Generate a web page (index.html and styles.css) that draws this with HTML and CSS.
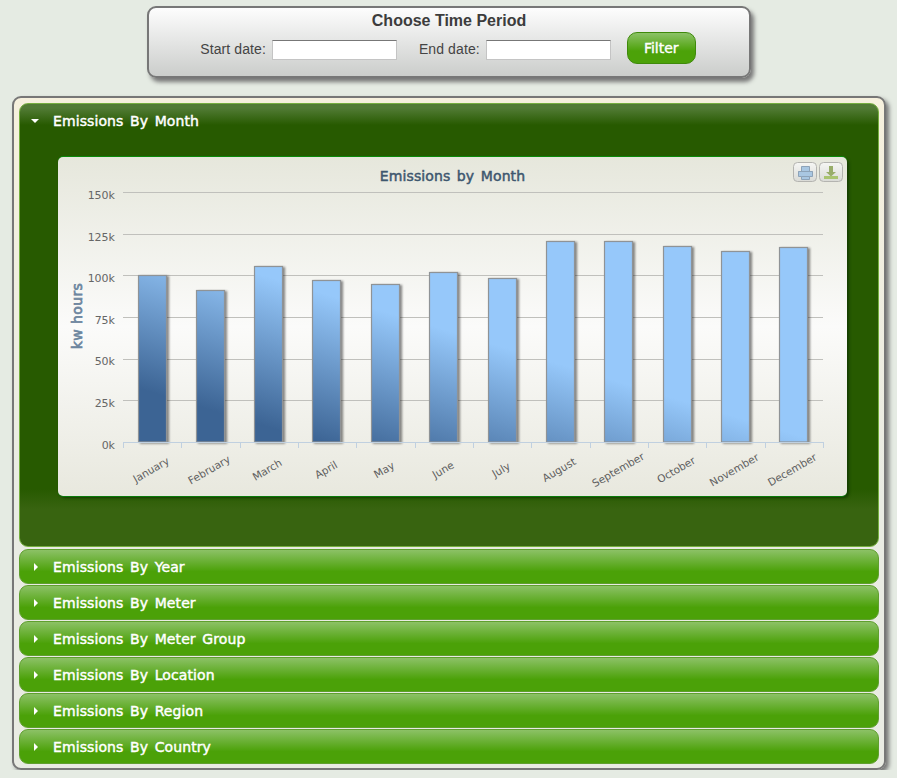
FILE: index.html
```html
<!DOCTYPE html>
<html lang="en">
<head>
    <meta charset="UTF-8">
    <meta name="viewport" content="width=device-width, initial-scale=1.0">
    <title>Emissions</title>
    <link rel="stylesheet" href="styles.css">
</head>
<body>

<form class="period-form">
    <h3>Choose Time Period</h3>
    <div class="period-row">
        <label for="start-date">Start date:</label>
        <input type="text" id="start-date">
        <label for="end-date" class="end-label">End date:</label>
        <input type="text" id="end-date">
        <button type="button" class="filter-button">Filter</button>
    </div>
</form>

<div class="accordion">
    <div class="section active">
        <h3 class="section-header"><span class="arrow-down"></span>Emissions By Month</h3>
        <div class="chart-card">
            <svg class="chart" width="789" height="339" viewBox="0 0 789 339">
                <defs>
                    <linearGradient id="bar-fill" gradientUnits="userSpaceOnUse" x1="94" y1="85" x2="52.7" y2="223">
                        <stop offset="0" stop-color="#96c8fa"/>
                        <stop offset="1" stop-color="#3c6494"/>
                    </linearGradient>
                    <linearGradient id="button-fill" x1="0" y1="0" x2="0" y2="1">
                        <stop offset="0" stop-color="#f6f6f4"/>
                        <stop offset="1" stop-color="#d9dad6"/>
                    </linearGradient>
                </defs>

                <text class="chart-title" x="394.5" y="24" text-anchor="middle">Emissions by Month</text>

                <!-- grid -->
                <g class="grid">
                    <path d="M65 35.5H765"/>
                    <path d="M65 77.5H765"/>
                    <path d="M65 118.5H765"/>
                    <path d="M65 160.5H765"/>
                    <path d="M65 202.5H765"/>
                    <path d="M65 243.5H765"/>
                </g>

                <!-- y axis -->
                <g class="y-labels" text-anchor="end">
                    <text x="57" y="42">150k</text>
                    <text x="57" y="84">125k</text>
                    <text x="57" y="125">100k</text>
                    <text x="57" y="167">75k</text>
                    <text x="57" y="208">50k</text>
                    <text x="57" y="250">25k</text>
                    <text x="57" y="292">0k</text>
                </g>
                <text class="y-title" transform="translate(24 159) rotate(-90)" text-anchor="middle">kw hours</text>

                <!-- bars -->
                <g class="bars">
                    <rect x="80.5" y="118.5" width="28" height="166.5"/>
                    <rect x="138.5" y="133.5" width="28" height="151.5"/>
                    <rect x="196.5" y="109.5" width="28" height="175.5"/>
                    <rect x="254.5" y="123.5" width="28" height="161.5"/>
                    <rect x="313.5" y="127.5" width="28" height="157.5"/>
                    <rect x="371.5" y="115.5" width="28" height="169.5"/>
                    <rect x="430.5" y="121.5" width="28" height="163.5"/>
                    <rect x="488.5" y="84.5" width="28" height="200.5"/>
                    <rect x="546.5" y="84.5" width="28" height="200.5"/>
                    <rect x="605.5" y="89.5" width="28" height="195.5"/>
                    <rect x="663.5" y="94.5" width="28" height="190.5"/>
                    <rect x="721.5" y="90.5" width="28" height="194.5"/>
                </g>

                <!-- x axis -->
                <path class="x-axis" d="M65 285.500H765M65.500 285V291M123.500 285V291M182.500 285V291M240.500 285V291M298.500 285V291M357.500 285V291M415.500 285V291M473.500 285V291M532.500 285V291M590.500 285V291M648.500 285V291M707.500 285V291M765.500 285V291"/>
                <g class="x-labels" text-anchor="middle">
                    <text transform="translate(95 316) rotate(-30)">January</text>
                    <text transform="translate(153 316) rotate(-30)">February</text>
                    <text transform="translate(211 316) rotate(-30)">March</text>
                    <text transform="translate(270 316) rotate(-30)">April</text>
                    <text transform="translate(328 316) rotate(-30)">May</text>
                    <text transform="translate(387 316) rotate(-30)">June</text>
                    <text transform="translate(445 316) rotate(-30)">July</text>
                    <text transform="translate(503 316) rotate(-30)">August</text>
                    <text transform="translate(562 316) rotate(-30)">September</text>
                    <text transform="translate(620 316) rotate(-30)">October</text>
                    <text transform="translate(678 316) rotate(-30)">November</text>
                    <text transform="translate(736 316) rotate(-30)">December</text>
                </g>

                <!-- print button -->
                <rect class="chart-button" x="735.5" y="5.5" width="23" height="19" rx="4" fill="url(#button-fill)"/>
                <path class="print-icon" d="M743.5 9.500h8v5h3v5h-3v3h-8v-3h-3v-5h3z"/>
                <path class="print-line" d="M740.5 14.500h14M743.5 19.500h8"/>

                <!-- download button -->
                <rect class="chart-button" x="761.5" y="5.5" width="23" height="19" rx="4" fill="url(#button-fill)"/>
                <path class="download-arrow" d="M771 9h4v6h3l-5 4.500-5-4.500h3z"/>
                <rect class="download-bar" x="766" y="19" width="14" height="3"/>
            </svg>
        </div>
    </div>
    <div class="section"><h3 class="section-header"><span class="arrow-right"></span>Emissions By Year</h3></div>
    <div class="section"><h3 class="section-header"><span class="arrow-right"></span>Emissions By Meter</h3></div>
    <div class="section"><h3 class="section-header"><span class="arrow-right"></span>Emissions By Meter Group</h3></div>
    <div class="section"><h3 class="section-header"><span class="arrow-right"></span>Emissions By Location</h3></div>
    <div class="section"><h3 class="section-header"><span class="arrow-right"></span>Emissions By Region</h3></div>
    <div class="section"><h3 class="section-header"><span class="arrow-right"></span>Emissions By Country</h3></div>
</div>

</body>
</html>
```

FILE: styles.css
```css
body {
    font-family: "Liberation Sans", Arial, sans-serif;
    margin: 0;
    padding: 6px 0 0;
    background-color: #e5ebe3;
    color: #444;
}
.period-form {
    box-sizing: border-box;
    width: 604px;
    height: 72px;
    margin: 0 auto 0 147px;
    border: 2px solid #777;
    border-radius: 9px;
    background: linear-gradient(#fdfdfd, #cbcdcb);
    box-shadow: 3px 4px 4px #777;
}
.period-form h3 {
    margin: 3px 0 0;
    font-size: 16px;
    line-height: 20px;
    text-align: center;
    color: #3c3c3c;
}
.period-row {
    display: flex;
    justify-content: center;
    align-items: center;
    margin-top: 1px;
    padding-right: 2px;
    font-size: 14px;
}
.period-row label {
    margin-top: 2px;
    margin-right: 6px;
    letter-spacing: 0.1px;
}
.period-row .end-label {
    margin-left: 22px;
}
.period-row input {
    box-sizing: border-box;
    width: 125px;
    height: 20px;
    margin: 3px 0 0;
    padding: 0 2px;
    border: 1px solid #c4c4c4;
    border-top: 1px solid #777;
    background: #fff;
}
.filter-button {
    width: 69px;
    height: 32px;
    margin-left: 16px;
    border: 1px solid #3f8a0b;
    border-radius: 10px;
    background: linear-gradient(#8cc267, #4ca209 60%);
    color: #fff;
    font-family: "DejaVu Sans", sans-serif;
    font-size: 14px;
    -webkit-text-stroke: 0.4px #fff;
}
.accordion {
    margin: 18px 11px 0 12px;
    padding: 5px 5px 3px;
    border: 2px solid #777;
    border-radius: 9px;
    background: linear-gradient(#f6f0dd, #e9ebe3 60%);
    box-shadow: 3px 3px 4px #777;
}
.section {
    box-sizing: border-box;
    margin-bottom: 1px;
    border: 1px solid #5f9f2e;
    border-radius: 9px;
    background: linear-gradient(#8cc166, #4ba108 65%);
    height: 35px;
}
.section.active {
    height: 444px;
    margin-bottom: 2px;
    border-color: #76ae40;
    background: linear-gradient(#527b35, #527b35 4px, #275a00 21px, #275a00 385px, #386410 405px);
}
.section-header {
    display: flex;
    align-items: center;
    height: 33px;
    margin: 0;
    padding-left: 33px;
    color: #fff;
    font-family: "DejaVu Sans", sans-serif;
    font-size: 14px;
    font-weight: normal;
    letter-spacing: 0.1px;
    word-spacing: 2px;
    -webkit-text-stroke: 0.45px #fff;
}
.arrow-down {
    width: 0;
    height: 0;
    margin: 0 14px 0 -22px;
    border-left: 4px solid transparent;
    border-right: 4px solid transparent;
    border-top: 4px solid #fff;
}
.arrow-right {
    width: 0;
    height: 0;
    margin: 0 15px 0 -19px;
    border-top: 4px solid transparent;
    border-bottom: 4px solid transparent;
    border-left: 4px solid #fff;
}
.chart-card {
    width: 789px;
    height: 339px;
    margin: 20px 0 0 38px;
    border-radius: 5px;
    background: linear-gradient(#e6e7dc, #fbfbfa 50%, #e8e8de);
    box-shadow: 0 -1px 0 #0b8a0b, 0 1px 0 #0b7a0b, 2px 2px 3px #143c00;
}
.chart {
    display: block;
    font-family: "DejaVu Sans", sans-serif;
}
.chart-title {
    font-size: 14px;
    letter-spacing: 0.1px;
    word-spacing: 2px;
    fill: #3e576f;
    stroke: #3e576f;
    stroke-width: 0.5;
}
.grid path {
    stroke: #c0c0bc;
    stroke-width: 1;
    fill: none;
}
.y-labels text {
    font-size: 11px;
    fill: #666;
}
.y-title {
    font-size: 14px;
    letter-spacing: 0.4px;
    fill: #6d869f;
    stroke: #6d869f;
    stroke-width: 0.7;
}
.bars {
    filter: drop-shadow(2px 1px 1px rgba(0, 0, 0, 0.45));
}
.bars rect {
    fill: url(#bar-fill);
    stroke: #8f9396;
    stroke-width: 1.2;
}
.x-axis {
    stroke: #c0d0e0;
    stroke-width: 1;
    fill: none;
}
.x-labels text {
    font-size: 10.5px;
    fill: #5f5f5f;
}
.chart-button {
    stroke: #b4b4b0;
    stroke-width: 1;
}
.print-icon {
    fill: #a9c7e2;
    stroke: #8da3b8;
    stroke-width: 1;
}
.print-line {
    stroke: #8da3b8;
    stroke-width: 1;
    fill: none;
}
.download-arrow {
    fill: #98ad6a;
}
.download-bar {
    fill: #a9c470;
}
```
